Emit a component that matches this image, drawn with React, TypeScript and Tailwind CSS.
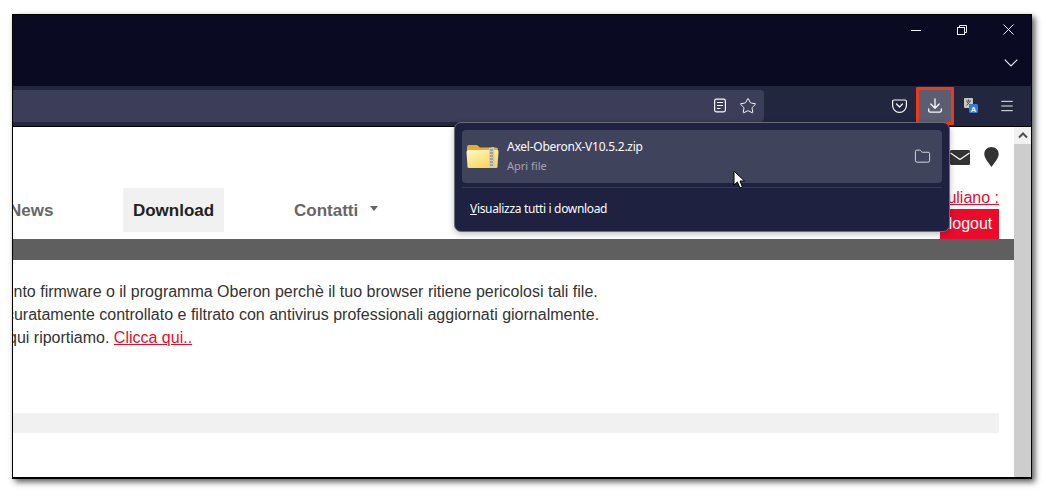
import { Folder, Menu, Star } from "lucide-react";

function ZipFolder() {
  return (
    <svg width="33" height="25" viewBox="0 0 33 25" className="shrink-0">
      <defs>
        <linearGradient id="front" x1="0" y1="0" x2="0.6" y2="1">
          <stop offset="0" stopColor="#fff8c4" />
          <stop offset="1" stopColor="#fad65c" />
        </linearGradient>
      </defs>
      <path d="M1 3 Q1 1 3 1 L11 1 L14 3.5 L30 3.5 Q32 3.5 32 5.5 L32 12 L1 12 Z" fill="#e0ad35" />
      <path d="M0.5 8 Q0.5 6 2.5 6 L31 6 Q33 6 32.5 8 L31.5 23 Q31.5 24 30 24 L3 24 Q1.5 24 1.5 23 Z" fill="url(#front)" />
      <path d="M23 4 L28 3 L29 24 L23 24 Z" fill="#cfcdc0" />
      <path d="M24 6 h3 M24 9 h3 M24 12 h3 M24 15 h3 M24 18 h3 M24 21 h3" stroke="#77776f" strokeWidth="1.2" />
    </svg>
  );
}

function TranslateIcon() {
  return (
    <svg width="14" height="15" viewBox="0 0 14 15">
      <rect x="0" y="0" width="9" height="10" rx="1" fill="#c9c6bd" />
      <path d="M2 3h5M4.5 1.5v2M2.5 7.5l3.5-4M3 4l3.5 3.5" stroke="#555" strokeWidth="1" />
      <rect x="5" y="6" width="9" height="9" rx="1.5" fill="#2f7de1" />
      <text x="9.5" y="13.5" fontSize="7.5" fontWeight="700" fill="#fff" textAnchor="middle" fontFamily="Liberation Sans">A</text>
    </svg>
  );
}

function PocketIcon() {
  return (
    <svg width="15" height="14" viewBox="0 0 15 14" fill="none" stroke="#fbfbfe" strokeWidth="1.2">
      <path d="M2 1h11A1.4 1.4 0 0 1 14.4 2.4V6.5A6.9 6.9 0 0 1 .6 6.5V2.4A1.4 1.4 0 0 1 2 1Z" />
      <path d="M4.5 5 7.5 8 10.5 5" strokeLinecap="round" strokeLinejoin="round" />
    </svg>
  );
}

function ReaderIcon() {
  return (
    <svg width="14" height="15" viewBox="0 0 14 15" fill="none" stroke="#fbfbfe" strokeWidth="1.2">
      <rect x="1.6" y="1.1" width="10.8" height="12.8" rx="1.8" />
      <path d="M4 4.5h6M4 7.5h6M4 10.5h3.5" />
    </svg>
  );
}

function DownloadIcon() {
  return (
    <svg width="14" height="15" viewBox="0 0 14 15" fill="none" stroke="#fbfbfe" strokeWidth="1.3" strokeLinecap="round" strokeLinejoin="round">
      <path d="M7 .8V10M2.8 6 7 10.2 11.2 6" />
      <path d="M.7 11v1.6a1.6 1.6 0 0 0 1.6 1.6h9.4a1.6 1.6 0 0 0 1.6-1.6V11" />
    </svg>
  );
}

function PinIcon() {
  return (
    <svg width="15" height="20" viewBox="0 0 15 20">
      <path d="M7.5 0C3.4 0 0.3 3 0.3 7c0 4.5 4.6 9 7.2 13 2.6-4 7.2-8.5 7.2-13 0-4-3.1-7-7.2-7Z" fill="#333" />
    </svg>
  );
}

function Cursor() {
  return (
    <svg width="14" height="20" viewBox="0 0 14 20" className="absolute left-[733px] top-[170px]">
      <path d="M1 1 L1 15 L4.4 12 L7 18 L9.4 17 L7 11 L11.5 11 Z" fill="#fff" stroke="#000" strokeWidth="1" />
    </svg>
  );
}

export default function App() {
  return (
    <div className="relative h-[498px] w-[1051px] overflow-hidden bg-white pl-3 pt-[14px] font-['Liberation_Sans',sans-serif]">
      <div className="flex h-[465px] w-[1020px] flex-col overflow-hidden border-t border-r border-b-2 border-l border-black shadow-[3px_3px_6px_rgba(0,0,0,0.65)]">
        {/* title bar */}
        <div className="flex h-[71px] shrink-0 flex-col bg-[#0a0b22]">
          <div className="flex h-[29px] justify-end">
            <div className="flex w-[46px] items-center justify-center">
              <svg width="10" height="10" viewBox="0 0 10 10"><path d="M0 5.5h10" stroke="#f0f0f4" strokeWidth="1" /></svg>
            </div>
            <div className="flex w-[46px] items-center justify-center">
              <svg width="10" height="10" viewBox="0 0 10 10" fill="none" stroke="#f0f0f4" strokeWidth="1">
                <rect x=".5" y="2.5" width="7" height="7" />
                <path d="M2.5 2.5V.5h7v7h-2" />
              </svg>
            </div>
            <div className="flex w-[46px] items-center justify-center">
              <svg width="11" height="11" viewBox="0 0 11 11"><path d="M.5.5l10 10M10.5.5l-10 10" stroke="#f0f0f4" strokeWidth="1" /></svg>
            </div>
          </div>
          <div className="flex justify-end pr-[13px] pt-[15px]">
            <svg width="14" height="8" viewBox="0 0 14 8"><path d="M.7.7 7 7 13.3.7" fill="none" stroke="#e8e8ee" strokeWidth="1.2" /></svg>
          </div>
        </div>

        {/* toolbar */}
        <div className="flex h-[41px] shrink-0 items-center border-b border-black bg-[#23263f] pb-px">
          <div className="flex h-[32px] w-[751px] items-center justify-end gap-[12px] rounded-r-[4px] bg-[#3b3d59] pr-[7px]">
            <ReaderIcon />
            <Star size={18} strokeWidth={1.3} color="#fbfbfe" />
          </div>
          <div className="ml-[128px] flex h-[16px] w-[15px] items-center"><PocketIcon /></div>
          <div className="ml-[9px] flex h-[38px] w-[38px] items-center justify-center rounded-[1px] border-[3px] border-[#f03a17] bg-[#5b5d70]">
            <DownloadIcon />
          </div>
          <div className="ml-[10px] flex w-[14px] items-center"><TranslateIcon /></div>
          <div className="ml-[21px]"><Menu size={16} strokeWidth={1.4} color="#fbfbfe" /></div>
        </div>

        {/* page */}
        <div className="flex min-h-0 flex-1">
          <div className="flex min-w-0 flex-1 flex-col overflow-hidden bg-white">
            <div className="flex h-[112px] shrink-0 justify-between pr-[15px]">
              <div className="flex items-start pt-[61px] text-[17px] font-bold text-[#666]">
                <div className="ml-[-4px] flex h-11 w-[44px] items-center pt-[2px]">News</div>
                <div className="ml-[70px] flex h-11 w-[101px] items-center justify-center bg-[#f1f1f1] pt-[2px] text-[#222]">Download</div>
                <div className="ml-[70px] flex h-11 items-center pt-[2px]">Contatti</div>
                <div className="ml-[12px] mt-[18px] h-0 w-0 border-x-[4px] border-t-[5px] border-x-transparent border-t-[#666]" />
              </div>
              <div className="flex flex-col items-end">
                <div className="flex items-center gap-[14px] pt-[20px]">
                  <svg width="20" height="15" viewBox="0 0 20 15">
                    <rect width="20" height="15" rx="1.5" fill="#333" />
                    <path d="M0.5 3 10 9.5 19.5 3" fill="none" stroke="#fff" strokeWidth="1.2" />
                  </svg>
                  <PinIcon />
                </div>
                <a className="mt-[22px] text-base leading-[18px] text-[#ee0a2a] underline">Giuliano :</a>
                <div className="mt-[2px] flex h-[30px] w-[59px] items-center justify-center bg-[#ee0a2a] pl-[2px] text-base text-white">logout</div>
              </div>
            </div>
            <div className="h-[21px] shrink-0 bg-[#5f5f5f]" />
            <div className="flex flex-col whitespace-nowrap pt-[20px] text-base leading-[23px] text-[#333]">
              <p className="ml-[-84px]">aggiornamento firmware o il programma Oberon perchè il tuo browser ritiene pericolosi tali file.</p>
              <p className="ml-[-24px]">accuratamente controllato e filtrato con antivirus professionali aggiornati giornalmente.</p>
              <p className="ml-[-5px]">qui riportiamo. <a className="text-[#ee0a2a] underline">Clicca qui..</a></p>
            </div>
            <div className="mr-[15px] mt-[64px] h-5 shrink-0 bg-[#f1f1f1]" />
          </div>
          <div className="flex w-[17px] shrink-0 flex-col bg-[#cdcdcd]">
            <div className="flex h-[17px] items-center justify-center bg-[#f1f1f1]">
              <svg width="10" height="7" viewBox="0 0 10 7"><path d="M1 5.5 5 1.5 9 5.5" fill="none" stroke="#505050" strokeWidth="2" /></svg>
            </div>
          </div>
        </div>
      </div>

      {/* downloads panel */}
      <div className="absolute left-[454px] top-[122px] flex h-[110px] w-[496px] flex-col rounded-[7px] border border-[#6a6b7d] bg-[#1e2240] px-[7px] pt-[7px] font-['Noto_Sans',sans-serif] shadow-[0_2px_6px_rgba(0,0,0,0.25)]">
        <div className="flex h-[53px] shrink-0 items-center rounded-[4px] bg-[#40435c] pl-[4px] pr-[11px]">
          <ZipFolder />
          <div className="ml-[8px] flex flex-1 flex-col gap-[3px]">
            <div className="text-xs leading-[16px] tracking-[-0.25px] text-[#fbfbfe]">Axel-OberonX-V10.5.2.zip</div>
            <div className="text-[11px] leading-[16px] text-[#a3a4b3]">Apri file</div>
          </div>
          <Folder size={17} strokeWidth={1.3} color="#e0e0ea" />
        </div>
        <div className="mt-[4px] h-px shrink-0 bg-[#35385a]" />
        <div className="pl-[8px] pt-[13px] text-xs leading-[16px] tracking-[-0.33px] text-[#fbfbfe]"><span className="underline">V</span>isualizza tutti i download</div>
      </div>
      <Cursor />
    </div>
  );
}
